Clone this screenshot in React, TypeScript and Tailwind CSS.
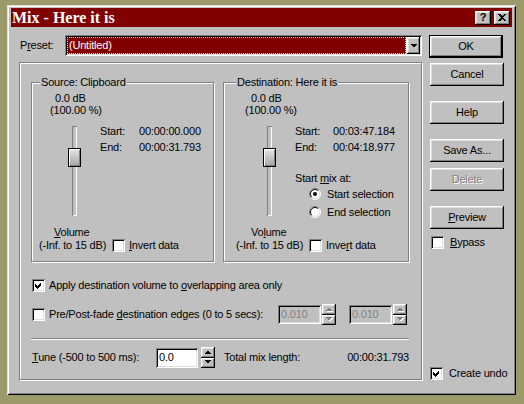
import type { ReactNode } from 'react';

const F = "font-['Liberation_Sans',Arial,sans-serif]";
const raised = 'shadow-[inset_-1px_-1px_#000,inset_1px_1px_#fff,inset_-2px_-2px_#808080,inset_2px_2px_#dfdfdf]';
const sunken = 'shadow-[inset_1px_1px_#808080,inset_-1px_-1px_#fff,inset_2px_2px_#000,inset_-2px_-2px_#dfdfdf]';
const etched = 'border border-[#808080] shadow-[inset_1px_1px_#fff,1px_1px_#fff]';

function Check({ checked = false }: { checked?: boolean }) {
  return (
    <span className={`relative block h-[13px] w-[13px] shrink-0 bg-white ${sunken}`}>
      {checked && (
        <svg className="absolute inset-0" width="13" height="13" viewBox="0 0 13 13" shapeRendering="crispEdges">
          <path d="M3 5L5 7L9 3V6L5 10L3 8Z" fill="#000" />
        </svg>
      )}
    </span>
  );
}

function Radio({ on = false }: { on?: boolean }) {
  return (
    <svg width="12" height="12" viewBox="0 0 12 12" className="shrink-0">
      <circle cx="6" cy="6" r="5" fill="#fff" />
      <path d="M2.1 9.9A5.5 5.5 0 0 1 9.9 2.1" stroke="#808080" fill="none" />
      <path d="M9.9 2.1A5.5 5.5 0 0 1 2.1 9.9" stroke="#fff" fill="none" />
      <path d="M2.8 9.2A4.5 4.5 0 0 1 9.2 2.8" stroke="#000" fill="none" />
      <path d="M9.2 2.8A4.5 4.5 0 0 1 2.8 9.2" stroke="#dfdfdf" fill="none" />
      {on && <circle cx="6" cy="6" r="2" fill="#000" />}
    </svg>
  );
}

function Btn({ children, def = false, disabled = false, className = '' }: { children: ReactNode; def?: boolean; disabled?: boolean; className?: string }) {
  return (
    <div className={`flex h-[23px] w-[74px] bg-[#c0c0c0] ${def ? 'border border-black' : ''} ${className}`}>
      <div className={`flex h-full w-full items-center justify-center ${raised} ${disabled ? 'text-[#808080] [text-shadow:1px_1px_#fff]' : 'text-black'}`}>
        {children}
      </div>
    </div>
  );
}

function SpinHalf({ up, disabled }: { up: boolean; disabled: boolean }) {
  return (
    <div className={`flex flex-1 items-center justify-center bg-[#c0c0c0] ${raised}`}>
      <svg width="8" height="5" viewBox="0 0 8 5" shapeRendering="crispEdges">
        {disabled && <path d={up ? 'M1 5H8L4.5 1.5Z' : 'M1 1H8L4.5 4.5Z'} fill="#fff" />}
        <path d={up ? 'M0 4H7L3.5 0.5Z' : 'M0 0H7L3.5 3.5Z'} fill={disabled ? '#808080' : '#000'} />
      </svg>
    </div>
  );
}

function Spin({ disabled = false, className = '' }: { disabled?: boolean; className?: string }) {
  return (
    <div className={`flex h-[21px] w-[14px] flex-col ${className}`}>
      <SpinHalf up disabled={disabled} />
      <SpinHalf up={false} disabled={disabled} />
    </div>
  );
}

function Slider() {
  return (
    <div className="relative h-[90px] w-[13px]">
      <div className="absolute left-[4px] top-0 h-full w-[5px] bg-[#c0c0c0] shadow-[inset_1px_1px_#808080,inset_-1px_-1px_#fff]" />
      <div className="absolute left-0 top-[22px] h-[19px] w-[13px] border border-black bg-linear-to-b from-[#e8e8e8] to-[#a4a4a4] shadow-[inset_1px_1px_#fff,inset_-1px_-1px_#808080]" />
    </div>
  );
}

function TitleBar() {
  return (
    <div className="mx-[4px] flex h-[19px] items-center bg-[#800000] pl-[1px] pr-[2px]">
      <span className="font-['Liberation_Serif',serif] text-[16px] font-bold leading-[19px] tracking-normal text-white">Mix - Here it is</span>
      <div className="ml-auto flex gap-[3px]">
        <div className={`flex h-[14px] w-[16px] items-center justify-center bg-[#c0c0c0] text-[11px] font-bold leading-none ${raised}`}>?</div>
        <div className={`flex h-[14px] w-[16px] items-center justify-center bg-[#c0c0c0] ${raised}`}>
          <svg width="8" height="7" viewBox="0 0 8 7" shapeRendering="crispEdges">
            <path d="M0 0H2L4 2L6 0H8L5 3.5L8 7H6L4 5L2 7H0L3 3.5Z" fill="#000" />
          </svg>
        </div>
      </div>
    </div>
  );
}

function SourceGroup() {
  return (
    <div className={`relative h-[180px] w-[183px] ${etched}`}>
      <span className="absolute left-[8px] top-[-7px] bg-[#c0c0c0] px-[1px]">Source: Clipboard</span>
      <div className="flex pt-[9px] leading-[12px]">
        <div className="flex w-[68px] flex-col">
          <span className="ml-[23px]">0.0 dB</span>
          <span className="ml-[18px]">(100.00 %)</span>
          <div className="ml-[36px] mt-[10px]"><Slider /></div>
          <span className="ml-[22px] mt-[10px]"><u>V</u>olume</span>
        </div>
        <div className="mt-[31px] flex flex-col leading-[16px]">
          <div className="flex"><span className="w-[39px]">Start:</span><span>00:00:00.000</span></div>
          <div className="flex"><span className="w-[39px]">End:</span><span>00:00:31.793</span></div>
        </div>
      </div>
      <div className="mt-[1px] flex h-[13px] items-center">
        <span className="ml-[7px] w-[73px]">(-Inf. to 15 dB)</span>
        <Check />
        <span className="ml-[4px]"><u>I</u>nvert data</span>
      </div>
    </div>
  );
}

function DestGroup() {
  return (
    <div className={`relative h-[180px] w-[186px] ${etched}`}>
      <span className="absolute left-[12px] top-[-7px] bg-[#c0c0c0] px-[1px]">Destination: Here it is</span>
      <div className="flex pt-[9px] leading-[12px]">
        <div className="flex w-[71px] flex-col">
          <span className="ml-[27px]">0.0 dB</span>
          <span className="ml-[21px]">(100.00 %)</span>
          <div className="ml-[39px] mt-[10px]"><Slider /></div>
          <span className="ml-[27px] mt-[10px]">Vo<u>l</u>ume</span>
        </div>
        <div className="mt-[31px] flex flex-col leading-[16px]">
          <div className="flex"><span className="w-[38px]">Start:</span><span>00:03:47.184</span></div>
          <div className="flex"><span className="w-[38px]">End:</span><span>00:04:18.977</span></div>
          <span className="mt-[15px]">Start <u>m</u>ix at:</span>
          <div className="flex h-[16px] items-center pl-[14px]">
            <Radio on />
            <span className="ml-[6px]">Start selection</span>
          </div>
          <div className="mt-[2px] flex h-[16px] items-center pl-[14px]">
            <Radio />
            <span className="ml-[6px]">End selection</span>
          </div>
        </div>
      </div>
      <div className="mt-[1px] flex h-[13px] items-center">
        <span className="ml-[12px] w-[73px]">(-Inf. to 15 dB)</span>
        <Check />
        <span className="ml-[4px]">Inve<u>r</u>t data</span>
      </div>
    </div>
  );
}

export default function App() {
  return (
    <div className={`h-[404px] w-[524px] overflow-hidden whitespace-nowrap bg-[#9c9a6a] pl-[7px] pt-[5px] ${F} text-[11px] leading-[13px] tracking-[-0.2px] text-black`}>
      <div className="h-[390px] w-[509px] bg-[#c0c0c0] pt-[3px] shadow-[inset_1px_1px_#dfdfdf,inset_-1px_-1px_#000,inset_2px_2px_#fff,inset_-2px_-2px_#808080]">
        <TitleBar />
        <div className="flex">
          <div className="ml-[12px] mt-[8px] flex w-[403px] flex-col">
            <div className="flex h-[21px] items-center">
              <span className="ml-[1px] w-[45px]">P<u>r</u>eset:</span>
              <div className={`flex h-[21px] w-[357px] bg-white p-[2px] ${sunken}`}>
                <div className="flex flex-1 items-center border border-dotted border-[#7fffff] bg-[#800000] pl-[1px] text-white">(Untitled)</div>
                <div className={`ml-[1px] flex w-[13px] items-center justify-center bg-[#c0c0c0] ${raised}`}>
                  <svg width="7" height="4" viewBox="0 0 7 4" shapeRendering="crispEdges">
                    <path d="M0 0H7L3.5 3.5Z" fill="#000" />
                  </svg>
                </div>
              </div>
            </div>

            <div className={`mt-[6px] h-[318px] w-[403px] pl-[11px] pt-[19px] ${etched}`}>
              <div className="flex gap-[9px]">
                <SourceGroup />
                <DestGroup />
              </div>

              <div className="mt-[17px] flex h-[13px] items-center">
                <span className="ml-[1px]"><Check checked /></span>
                <span className="ml-[4px]">Apply destination volume to <u>o</u>verlapping area only</span>
              </div>

              <div className="mt-[12px] flex h-[21px] items-center">
                <span className="ml-[1px]"><Check /></span>
                <span className="ml-[4px] w-[229px]">Pre/Post-fade <u>d</u>estination edges (0 to 5 secs):</span>
                <div className={`flex h-[19px] w-[43px] items-center bg-[#c0c0c0] pl-[3px] text-[#808080] ${sunken}`}>0.010</div>
                <Spin disabled className="ml-[1px]" />
                <div className={`ml-[13px] flex h-[19px] w-[43px] items-center bg-[#c0c0c0] pl-[3px] text-[#808080] ${sunken}`}>0.010</div>
                <Spin disabled className="ml-[1px]" />
              </div>

              <div className="mt-[13px] h-[2px] w-[378px] border-t border-[#808080] bg-white" />

              <div className="mt-[7px] flex h-[21px] w-[378px] items-center">
                <span className="w-[125px] pl-[1px]"><u>T</u>une (-500 to 500 ms):</span>
                <div className={`flex h-[20px] w-[42px] items-center bg-white pl-[3px] ${sunken}`}>0.0</div>
                <Spin className="ml-[3px] w-[13px]" />
                <span className="ml-[9px]">Total mix length:</span>
                <span className="ml-auto">00:00:31.793</span>
              </div>
            </div>
          </div>

          <div className="ml-[7px] mt-[8px] flex w-[75px] flex-col">
            <Btn def>OK</Btn>
            <Btn className="ml-[1px] mt-[5px]">Cancel</Btn>
            <Btn className="ml-[1px] mt-[15px]">Help</Btn>
            <Btn className="ml-[1px] mt-[15px]">Save As...</Btn>
            <Btn className="ml-[1px] mt-[6px]" disabled>Delete</Btn>
            <Btn className="ml-[1px] mt-[15px]"><span><u>P</u>review</span></Btn>
            <div className="ml-[2px] mt-[7px] flex h-[13px] items-center">
              <Check />
              <span className="ml-[6px]"><u>B</u>ypass</span>
            </div>
            <div className="ml-[1px] mt-auto flex h-[13px] items-center">
              <Check checked />
              <span className="ml-[6px]">Create undo</span>
            </div>
          </div>
        </div>
      </div>
    </div>
  );
}
